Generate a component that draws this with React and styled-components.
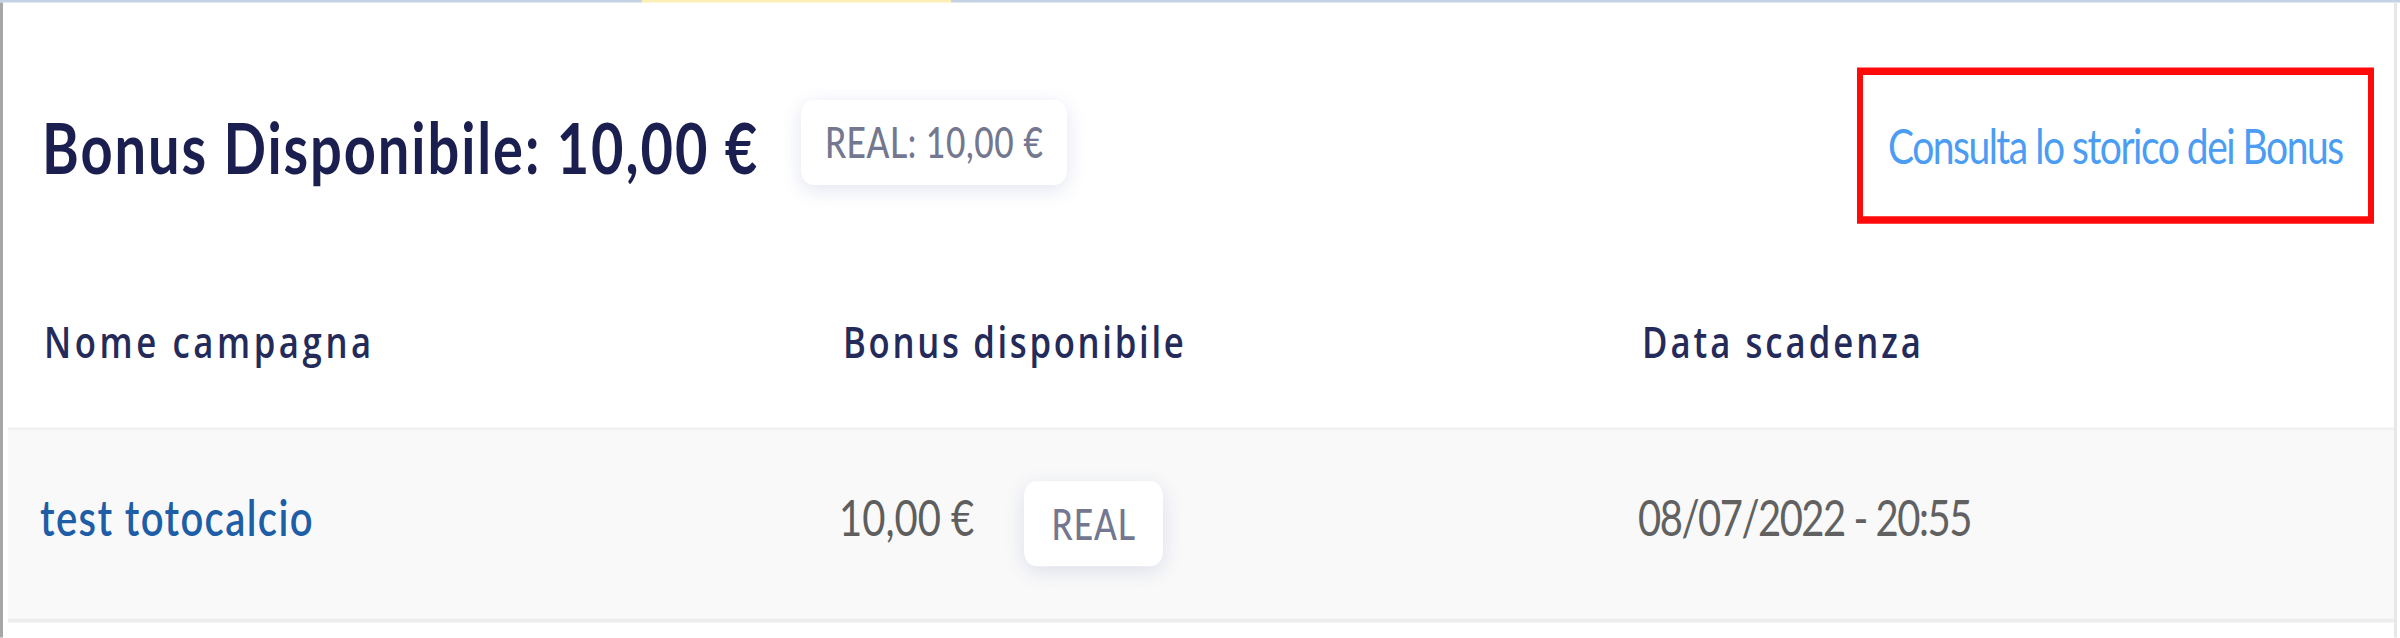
import React from 'react'
import styled, { createGlobalStyle } from 'styled-components'

// the capture is stretched vertically, so the page is laid out at natural
// proportions and stretched once; v() takes heights measured on the capture
const STRETCH = 1.25
const v = n => `${(n / STRETCH).toFixed(2)}px`

const GlobalStyle = createGlobalStyle`
  html {
    overflow: hidden;
  }
  html, body {
    margin: 0;
    padding: 0;
    background: #fff;
  }
  body {
    min-height: 638px;
    font-family: Lato, 'Noto Sans', sans-serif;
  }
`

const Page = styled.div`
  width: 2400px;
  height: ${v(638)};
  display: flex;
  flex-direction: column;
  transform: scaleY(${STRETCH});
  transform-origin: 0 0;
`

const TopStrip = styled.div`
  display: flex;
  flex-shrink: 0;
  height: ${v(2)};
`

const StripSegment = styled.div`
  flex: ${p => (p.$w ? 'none' : 1)};
  width: ${p => (p.$w ? `${p.$w}px` : 'auto')};
  background: ${p => p.$color};
`

const Frame = styled.div`
  flex: 1;
  width: 2397px;
  box-sizing: border-box;
  display: flex;
  flex-direction: column;
  border-left: 3px solid #a7a7a7;
  border-right: 3px solid #e7e7e7;
`

const Summary = styled.section`
  height: ${v(287)};
  display: flex;
  align-items: center;
  padding: 0 20px 0 39px;
`

const Title = styled.h2`
  margin: ${v(4)} 0 0;
  font-size: 56px;
  font-weight: 700;
  line-height: 1;
  letter-spacing: 1.9px;
  color: #1b1f50;
  white-space: nowrap;
`

const Pill = styled.span`
  flex: none;
  display: inline-flex;
  align-items: center;
  justify-content: center;
  width: ${p => p.$w}px;
  height: ${v(85)};
  margin-left: ${p => p.$gap}px;
  margin-bottom: ${p => v(p.$lift || 0)};
  box-sizing: border-box;
  background: #fff;
  border-radius: 12px;
  box-shadow: 0 4px 18px rgba(50, 70, 150, 0.14);
  font-size: 33.5px;
  font-weight: 500;
  line-height: 1;
  letter-spacing: ${p => p.$spacing}px;
  color: #73778f;
  white-space: nowrap;
`

const Spacer = styled.div`
  flex: 1;
`

const HistoryLink = styled.a`
  flex: none;
  display: flex;
  align-items: center;
  width: 517px;
  height: ${v(157)};
  box-sizing: border-box;
  padding-left: 25px;
  border: 6px solid #ff0a0a;
  font-size: 39px;
  line-height: 1;
  letter-spacing: -1.5px;
  color: #4a9df3;
  text-decoration: none;
  white-space: nowrap;
`

const TableHead = styled.div`
  display: grid;
  grid-template-columns: 799px 799px 1fr;
  height: ${v(138)};
  box-sizing: border-box;
  padding: ${v(30.4)} 0 0 41px;
`

const HeadCell = styled.div`
  font-family: 'Open Sans', Lato, sans-serif;
  font-size: 34.7px;
  font-weight: 600;
  line-height: 1;
  letter-spacing: ${p => p.$spacing}px;
  color: #242a59;
  white-space: nowrap;
`

const Band = styled.div`
  display: grid;
  grid-template-columns: 799px 799px 1fr;
  align-items: center;
  height: ${v(196)};
  box-sizing: border-box;
  margin-left: 5px;
  padding-left: 32px;
  background: #f9f9f9;
  border-top: 2px solid #f1f1f1;
  border-bottom: 3px solid #ededed;
`

const Cell = styled.div`
  display: flex;
  align-items: center;
`

const RowText = styled.span`
  margin-bottom: ${v(13)};
  font-size: 40px;
  font-weight: ${p => (p.$link ? 600 : 400)};
  line-height: 1;
  letter-spacing: ${p => p.$spacing}px;
  color: ${p => p.$color};
  white-space: nowrap;
`

const App = () => {
  return (
    <Page>
      <GlobalStyle />
      <TopStrip>
        <StripSegment $w={642} $color="#c6d2e4" />
        <StripSegment $w={309} $color="#fbefb5" />
        <StripSegment $color="#c6d2e4" />
      </TopStrip>
      <Frame>
        <Summary>
          <Title>Bonus Disponibile: 10,00 €</Title>
          <Pill $w={266} $gap={42} $lift={6} $spacing={0.6}>
            REAL: 10,00 €
          </Pill>
          <Spacer />
          <HistoryLink href="#">Consulta lo storico dei Bonus</HistoryLink>
        </Summary>
        <TableHead>
          <HeadCell $spacing={3.6}>Nome campagna</HeadCell>
          <HeadCell $spacing={2.7}>Bonus disponibile</HeadCell>
          <HeadCell $spacing={3}>Data scadenza</HeadCell>
        </TableHead>
        <Band>
          <Cell>
            <RowText $link $spacing={1.4} $color="#1d5ea7">
              test totocalcio
            </RowText>
          </Cell>
          <Cell>
            <RowText $spacing={0} $color="#5e5e5e">
              10,00 €
            </RowText>
            <Pill $w={139} $gap={50} $spacing={1}>
              REAL
            </Pill>
          </Cell>
          <Cell>
            <RowText $spacing={-1.5} $color="#616161">
              08/07/2022 - 20:55
            </RowText>
          </Cell>
        </Band>
      </Frame>
    </Page>
  )
}

export default App
